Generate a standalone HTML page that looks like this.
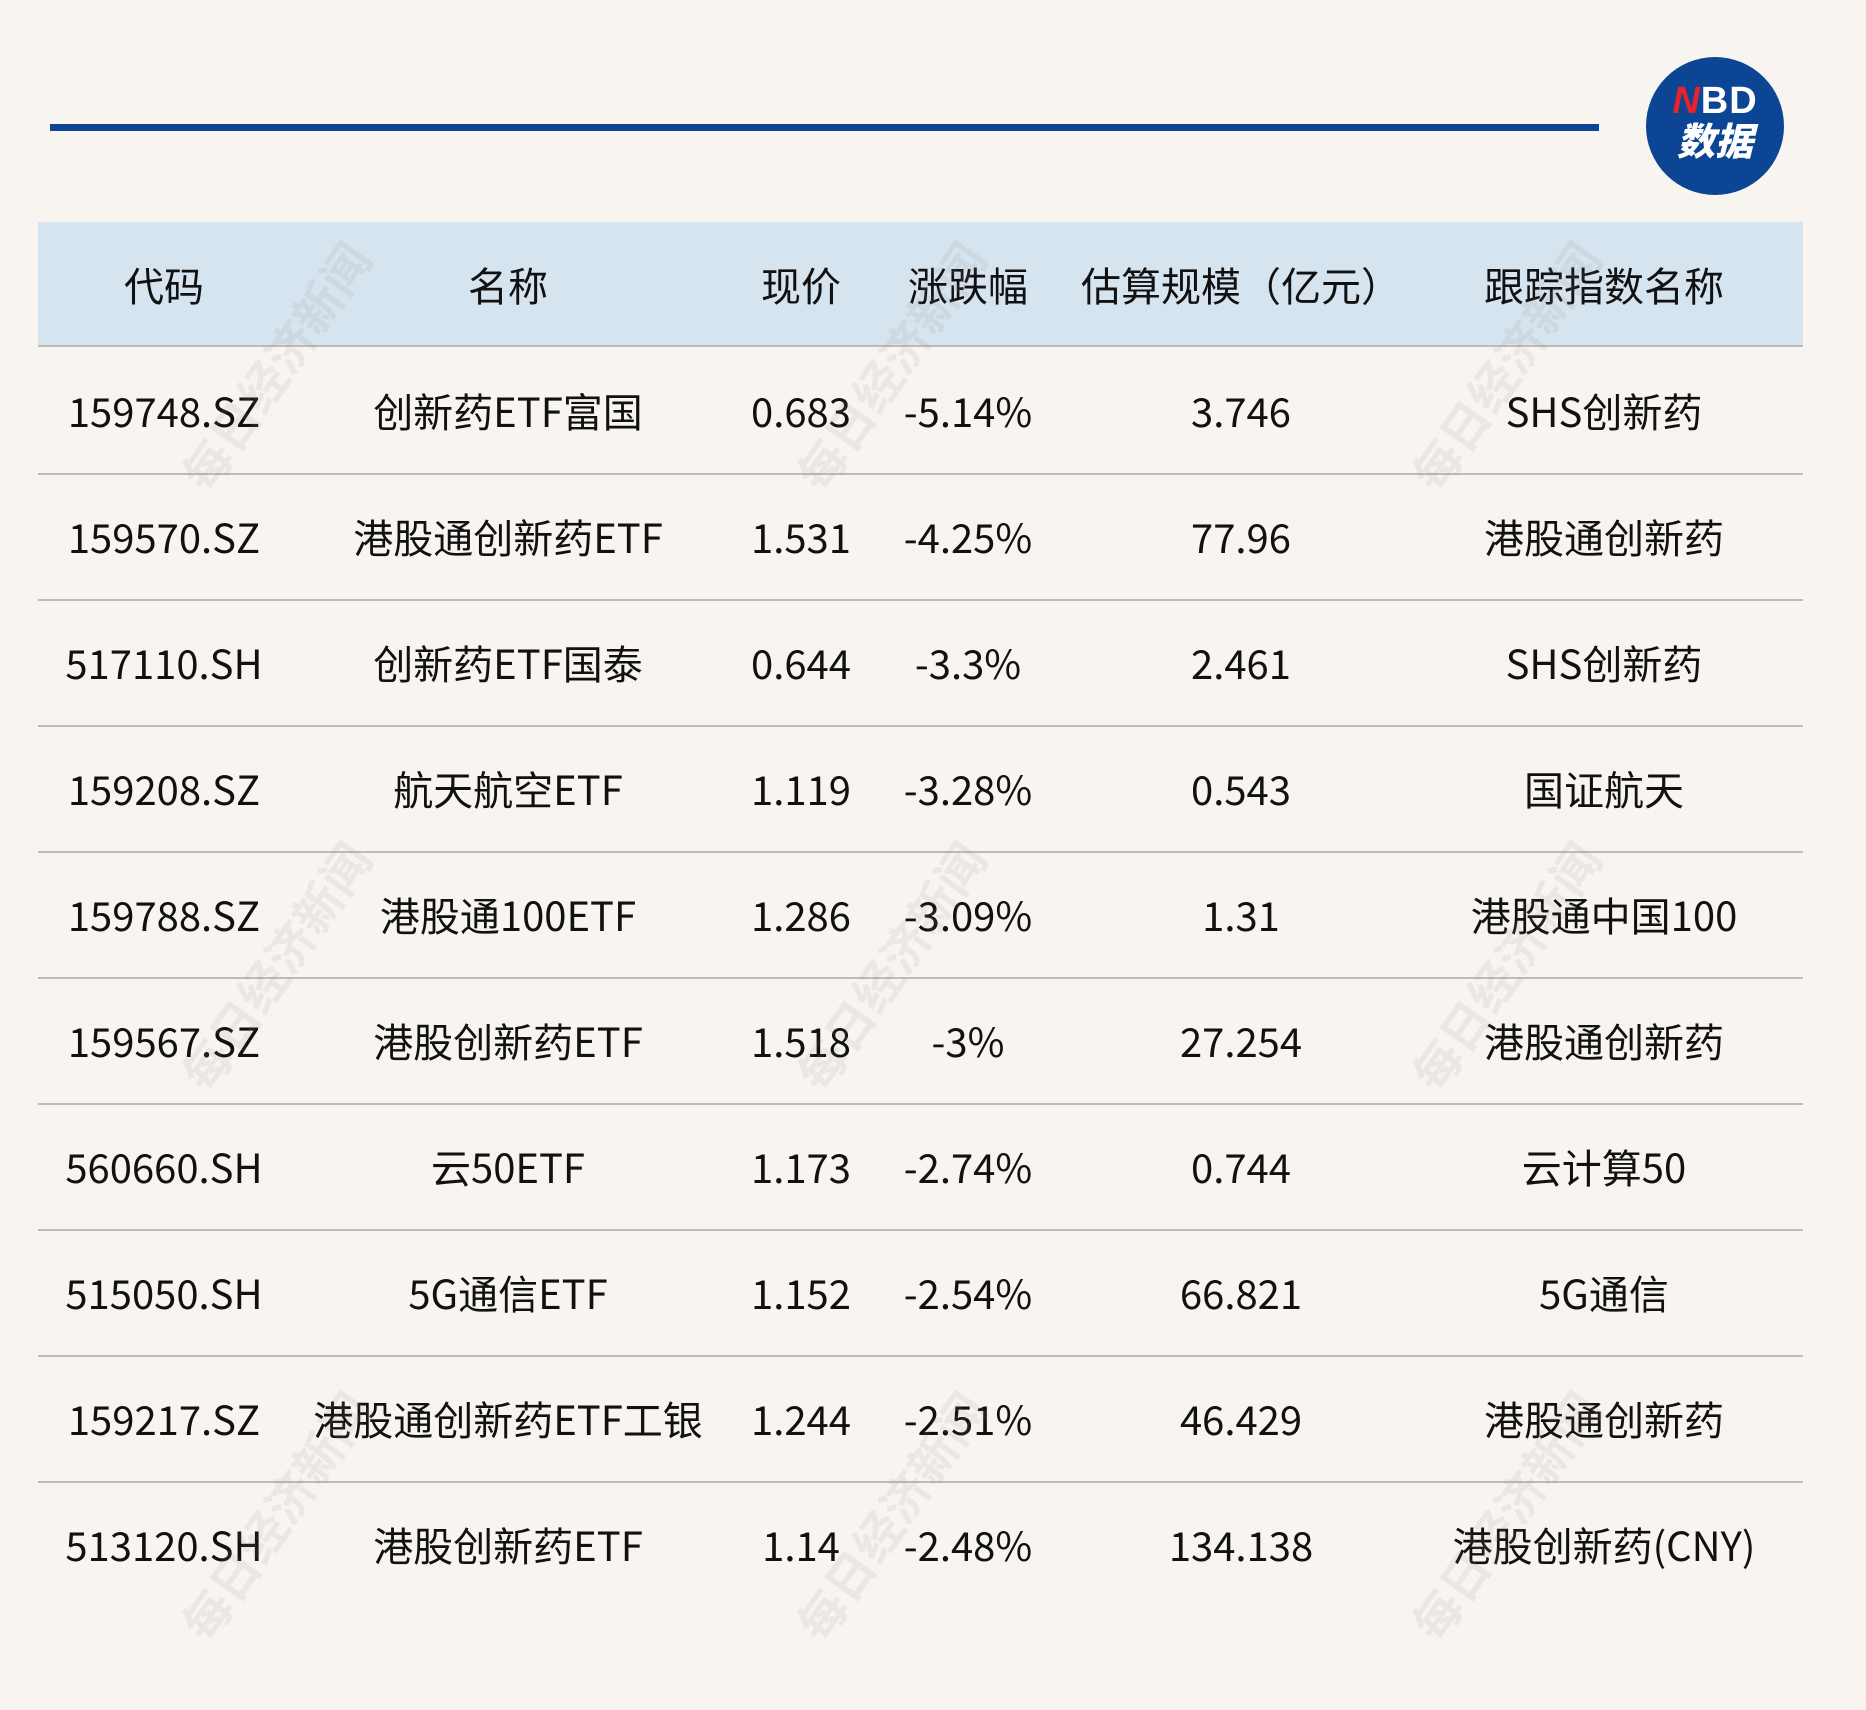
<!DOCTYPE html>
<html><head><meta charset="utf-8"><style>
body{margin:0;width:1866px;height:1710px;background:#f8f5f1;position:relative;overflow:hidden;font-family:"Noto Sans CJK SC","Liberation Sans",sans-serif;color:#111}
.line{position:absolute;left:50px;top:124px;width:1549px;height:7px;background:#0b4594}
.logo{position:absolute;left:1646px;top:57px;width:138px;height:138px;border-radius:50%;background:#0b4594;color:#fff;text-align:center;font-weight:bold;font-family:"Liberation Sans","Noto Sans CJK SC",sans-serif}
.logo .a{position:absolute;top:24px;left:0;right:0;font-size:38px;line-height:40px;letter-spacing:1px}
.logo .a i{color:#e8222d;font-style:italic}
.logo .b{position:absolute;top:64px;left:0;right:0;font-size:38px;line-height:44px;font-weight:900;font-style:italic}
.hdr{position:absolute;left:38px;top:222px;width:1765px;height:123px;background:#d6e4f0;border-bottom:2px solid #bcbcbc}
.row{position:absolute;left:38px;width:1765px;height:126px;border-bottom:2px solid #bcbcbc}
.c{position:absolute;top:0;height:100%;display:flex;align-items:center;justify-content:center;font-size:40px;white-space:nowrap}
.wm{position:absolute;font-size:48px;color:rgba(150,140,130,0.13);font-weight:bold;transform:rotate(-55deg);font-family:"Noto Sans CJK SC",sans-serif;white-space:nowrap}
</style></head><body>
<div class="line"></div>
<div class="logo"><div class="a"><i>N</i>BD</div><div class="b">数据</div></div>
<div class="hdr">
<div class="c" style="left:26px;width:200px">代码</div>
<div class="c" style="left:320px;width:300px">名称</div>
<div class="c" style="left:713px;width:100px">现价</div>
<div class="c" style="left:860px;width:140px">涨跌幅</div>
<div class="c" style="left:1053px;width:300px">估算规模（亿元）</div>
<div class="c" style="left:1416px;width:300px">跟踪指数名称</div>
</div>
<div id="rows"></div>
<script>
var d=[["159748.SZ","创新药ETF富国","0.683","-5.14%","3.746","SHS创新药"],
["159570.SZ","港股通创新药ETF","1.531","-4.25%","77.96","港股通创新药"],
["517110.SH","创新药ETF国泰","0.644","-3.3%","2.461","SHS创新药"],
["159208.SZ","航天航空ETF","1.119","-3.28%","0.543","国证航天"],
["159788.SZ","港股通100ETF","1.286","-3.09%","1.31","港股通中国100"],
["159567.SZ","港股创新药ETF","1.518","-3%","27.254","港股通创新药"],
["560660.SH","云50ETF","1.173","-2.74%","0.744","云计算50"],
["515050.SH","5G通信ETF","1.152","-2.54%","66.821","5G通信"],
["159217.SZ","港股通创新药ETF工银","1.244","-2.51%","46.429","港股通创新药"],
["513120.SH","港股创新药ETF","1.14","-2.48%","134.138","港股创新药(CNY)"]];
var L=[[26,200],[320,300],[713,100],[860,140],[1053,300],[1416,300]];
var h="";
d.forEach(function(r,i){h+='<div class="row" style="top:'+(347+i*126)+'px;'+(i==9?'border-bottom:none':'')+'">';
r.forEach(function(t,j){h+='<div class="c" style="left:'+L[j][0]+'px;width:'+L[j][1]+'px">'+t+'</div>';});h+='</div>';});
document.getElementById("rows").innerHTML=h;
</script>
<div class="wm" style="left:130px;top:330px">每日经济新闻</div>
<div class="wm" style="left:745px;top:330px">每日经济新闻</div>
<div class="wm" style="left:1360px;top:330px">每日经济新闻</div>
<div class="wm" style="left:130px;top:930px">每日经济新闻</div>
<div class="wm" style="left:745px;top:930px">每日经济新闻</div>
<div class="wm" style="left:1360px;top:930px">每日经济新闻</div>
<div class="wm" style="left:130px;top:1480px">每日经济新闻</div>
<div class="wm" style="left:745px;top:1480px">每日经济新闻</div>
<div class="wm" style="left:1360px;top:1480px">每日经济新闻</div>
</body></html>
